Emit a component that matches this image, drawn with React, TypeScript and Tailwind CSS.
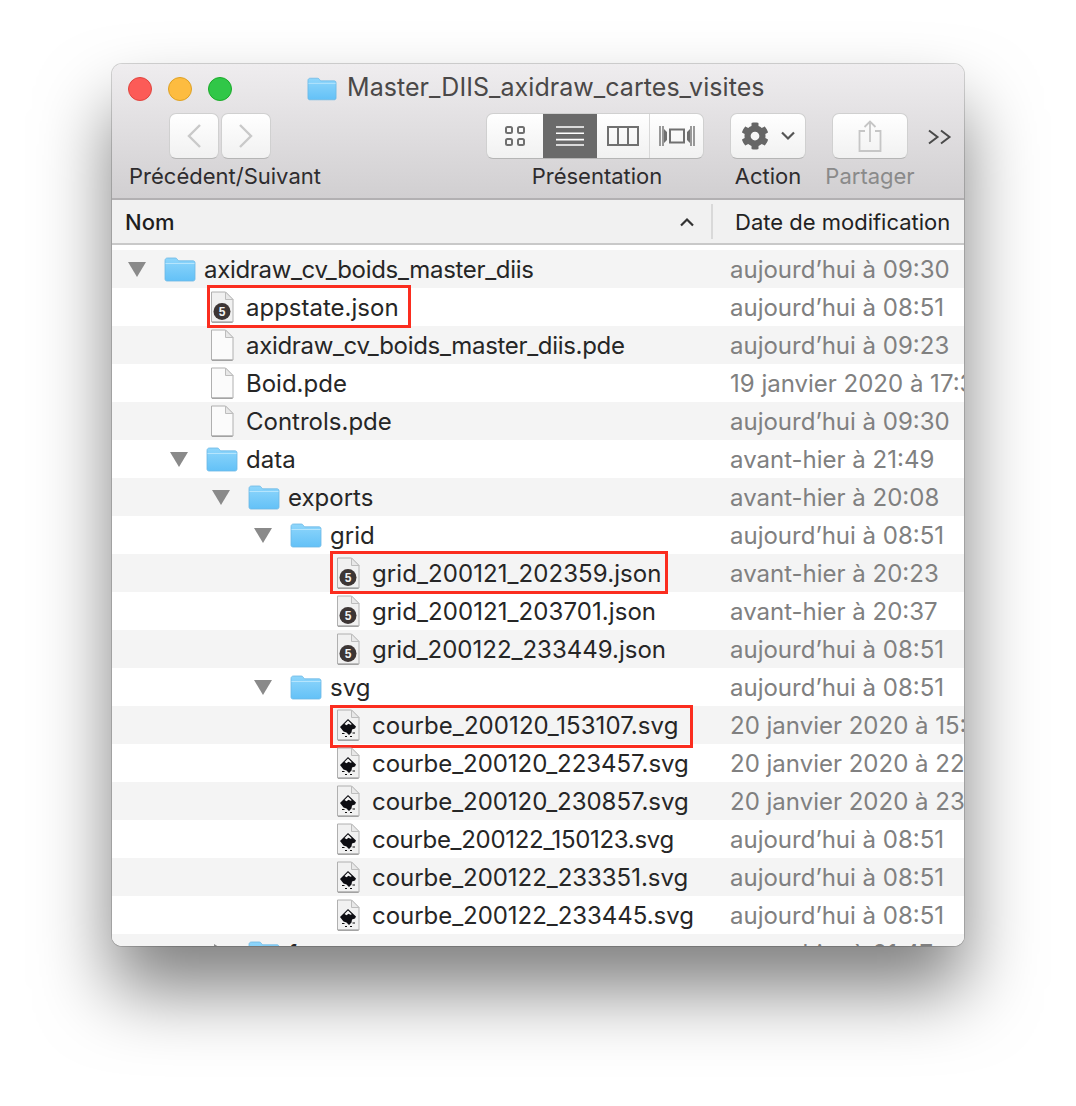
import type { ReactNode } from 'react'
import { FaCog } from 'react-icons/fa'

type Kind = 'folder' | 'blank' | 'json' | 'svg'

type Row = {
  name: string
  date: string
  depth: number
  kind: Kind
  closed?: boolean
  box?: string
  tracking: string
}

const rows: Row[] = [
  { name: 'axidraw_cv_boids_master_diis', date: 'aujourd’hui à 09:30', depth: 0, kind: 'folder', tracking: 'tracking-[-0.32px]' },
  { name: 'appstate.json', date: 'aujourd’hui à 08:51', depth: 1, kind: 'json', box: 'left-[95px] top-[-3px] w-[204px]', tracking: 'tracking-normal' },
  { name: 'axidraw_cv_boids_master_diis.pde', date: 'aujourd’hui à 09:23', depth: 1, kind: 'blank', tracking: 'tracking-[-0.32px]' },
  { name: 'Boid.pde', date: '19 janvier 2020 à 17:32', depth: 1, kind: 'blank', tracking: 'tracking-normal' },
  { name: 'Controls.pde', date: 'aujourd’hui à 09:30', depth: 1, kind: 'blank', tracking: 'tracking-normal' },
  { name: 'data', date: 'avant-hier à 21:49', depth: 1, kind: 'folder', tracking: 'tracking-normal' },
  { name: 'exports', date: 'avant-hier à 20:08', depth: 2, kind: 'folder', tracking: 'tracking-normal' },
  { name: 'grid', date: 'aujourd’hui à 08:51', depth: 3, kind: 'folder', tracking: 'tracking-normal' },
  { name: 'grid_200121_202359.json', date: 'avant-hier à 20:23', depth: 4, kind: 'json', box: 'left-[218px] top-[-3px] w-[338px]', tracking: 'tracking-[0.08px]' },
  { name: 'grid_200121_203701.json', date: 'avant-hier à 20:37', depth: 4, kind: 'json', tracking: 'tracking-[0.08px]' },
  { name: 'grid_200122_233449.json', date: 'aujourd’hui à 08:51', depth: 4, kind: 'json', tracking: 'tracking-normal' },
  { name: 'svg', date: 'aujourd’hui à 08:51', depth: 3, kind: 'folder', tracking: 'tracking-normal' },
  { name: 'courbe_200120_153107.svg', date: '20 janvier 2020 à 15:31', depth: 4, kind: 'svg', box: 'left-[218px] top-[-1px] w-[363px]', tracking: 'tracking-[0.08px]' },
  { name: 'courbe_200120_223457.svg', date: '20 janvier 2020 à 22:34', depth: 4, kind: 'svg', tracking: 'tracking-[-0.04px]' },
  { name: 'courbe_200120_230857.svg', date: '20 janvier 2020 à 23:08', depth: 4, kind: 'svg', tracking: 'tracking-[-0.04px]' },
  { name: 'courbe_200122_150123.svg', date: 'aujourd’hui à 08:51', depth: 4, kind: 'svg', tracking: 'tracking-[-0.3px]' },
  { name: 'courbe_200122_233351.svg', date: 'aujourd’hui à 08:51', depth: 4, kind: 'svg', tracking: 'tracking-[-0.04px]' },
  { name: 'courbe_200122_233445.svg', date: 'aujourd’hui à 08:51', depth: 4, kind: 'svg', tracking: 'tracking-[-0.04px]' },
  { name: 'fonts', date: 'avant-hier à 21:47', depth: 2, kind: 'folder', closed: true, tracking: 'tracking-normal' },
]

const indents = ['w-[16px]', 'w-[58px]', 'w-[100px]', 'w-[142px]', 'w-[184px]']

function FolderIcon({ small }: { small?: boolean }) {
  return (
    <svg width={small ? 30 : 32} height={small ? 24 : 25} viewBox="0 0 32 25" className="block">
      <defs>
        <linearGradient id="folderFill" x1="0" y1="0" x2="0" y2="1">
          <stop offset="0" stopColor="#8fd6fb" />
          <stop offset="1" stopColor="#63c1f7" />
        </linearGradient>
      </defs>
      <path
        d="M1 3.5C1 2 2 1 3.500 1h7.500c1.200 0 1.800 .5 2.500 1.500l1 1.300H29c1.200 0 2 .8 2 2V22c0 1.200-.8 2-2 2H3c-1.200 0-2-.8-2-2z"
        fill="url(#folderFill)"
        stroke="#6cb8e4"
        strokeWidth="0.8"
      />
      <path d="M1.500 6.500H30.500" stroke="#b5e5fd" strokeWidth="1" />
    </svg>
  )
}

function PageIcon({ kind }: { kind: Kind }) {
  return (
    <svg width="24" height="32" viewBox="0 0 24 32" className="block">
      <path d="M1.500 1H15.500L23 8.500V31H1.500z" fill={kind === 'blank' ? '#fbfbfb' : '#f1f1f1'} stroke="#b0b0b0" strokeWidth="1" />
      <path d="M15.500 1V8.500H23z" fill="#e8e8e8" stroke="#bdbdbd" strokeWidth="1" />
      <path d="M2 31.200H22.500" stroke="#8d8d8d" strokeWidth="1" />
      {kind === 'json' && (
        <>
          <circle cx="12" cy="20.500" r="8.500" fill="#3d3635" />
          <text x="12" y="24.800" textAnchor="middle" fontSize="12" fontWeight="700" fill="#f2f2f2" fontFamily="'Liberation Sans', sans-serif">
            5
          </text>
        </>
      )}
      {kind === 'svg' && (
        <>
          <path d="M12 10L20 17.500L19 19.500L16 20.500L15.500 23.500L13 26L10.500 23.500L7.500 22.500L4 18z" fill="#0d0d12" />
          <path d="M12 11.500L15.800 15.200L14.400 15.800L12.600 14.800L10.400 16.200L8.600 15z" fill="#f6f6f6" />
          <path d="M6 24.500H8.500M16.500 24H19M9 27.500H11M14 27.500H16" stroke="#111" strokeWidth="1.200" />
        </>
      )}
    </svg>
  )
}

function Triangle({ closed }: { closed?: boolean }) {
  return (
    <svg width="18" height="18" viewBox="0 0 18 18" className="block">
      {closed ? <path d="M2 0L17 9L2 18z" fill="#8a8a8a" /> : <path d="M0 2H18L9 17z" fill="#8a8a8a" />}
    </svg>
  )
}

function FileRow({ row, index }: { row: Row; index: number }) {
  const isFolder = row.kind === 'folder'
  return (
    <div className={`flex h-[38px] shrink-0 items-center ${index % 2 === 0 ? 'bg-[#f4f4f4]' : 'bg-white'}`}>
      <div className="relative flex h-full w-[618px] shrink-0 items-center">
        <div className={`shrink-0 ${indents[row.depth]}`} />
        {isFolder ? (
          <>
            <div className="w-[36px] shrink-0">
              <Triangle closed={row.closed} />
            </div>
            <div className="mr-[8px] w-[32px] shrink-0">
              <FolderIcon />
            </div>
          </>
        ) : (
          <div className="mr-[12px] ml-[40px] w-[24px] shrink-0">
            <PageIcon kind={row.kind} />
          </div>
        )}
        <span className={`whitespace-nowrap pt-[1px] text-[24px] leading-[38px] text-[#262626] ${row.tracking}`}>{row.name}</span>
        {row.box && <div className={`absolute h-[43px] border-[3px] border-[#fb2d1f] ${row.box}`} />}
      </div>
      <span className="whitespace-nowrap pt-[1px] text-[24px] leading-[38px] text-[#808080]">{row.date}</span>
    </div>
  )
}

function ToolButton({ className, children }: { className: string; children: ReactNode }) {
  return (
    <div
      className={`flex h-[46px] items-center justify-center rounded-[7px] border border-[#d0d0d0] border-b-[#b5b5b5] bg-gradient-to-b from-white to-[#f1f1f1] ${className}`}
    >
      {children}
    </div>
  )
}

function GridViewIcon() {
  return (
    <svg width="22" height="22" viewBox="0 0 22 22">
      <g fill="none" stroke="#707070" strokeWidth="2">
        <rect x="2" y="2" width="6" height="6" rx="1.500" />
        <rect x="14" y="2" width="6" height="6" rx="1.500" />
        <rect x="2" y="14" width="6" height="6" rx="1.500" />
        <rect x="14" y="14" width="6" height="6" rx="1.500" />
      </g>
    </svg>
  )
}

function ListViewIcon() {
  return (
    <svg width="28" height="20" viewBox="0 0 28 20">
      <path d="M0 1H28M0 7.300H28M0 13.600H28M0 19H28" stroke="#fff" strokeWidth="1.600" />
    </svg>
  )
}

function ColumnViewIcon() {
  return (
    <svg width="32" height="20" viewBox="0 0 32 20">
      <path d="M1 1H31V19H1zM11 1V19M21 1V19" fill="none" stroke="#707070" strokeWidth="2" />
    </svg>
  )
}

function GalleryViewIcon() {
  return (
    <svg width="36" height="22" viewBox="0 0 36 22">
      <g fill="none" stroke="#707070">
        <rect x="11" y="4.500" width="14" height="13" strokeWidth="2" />
        <path d="M1 1V21M4 1V21M32 1V21M35 1V21" strokeWidth="1.400" />
      </g>
      <path d="M5 4L8 7V15L5 18zM31 4L28 7V15L31 18z" fill="#707070" />
    </svg>
  )
}

function ShareIcon() {
  return (
    <svg width="24" height="32" viewBox="0 0 24 32">
      <path d="M7 11H1.500V31H22.500V11H17M12 22V2M6.500 7L12 1.500L17.500 7" fill="none" stroke="#c6c6c6" strokeWidth="1.800" />
    </svg>
  )
}

function Chevron({ dir, color }: { dir: 'left' | 'right'; color: string }) {
  return (
    <svg width="16" height="26" viewBox="0 0 16 26">
      <path d={dir === 'left' ? 'M14 2L3 13L14 24' : 'M2 2L13 13L2 24'} fill="none" stroke={color} strokeWidth="2.400" />
    </svg>
  )
}

export default function App() {
  return (
    <div className="h-[1106px] w-full overflow-hidden bg-white pt-[64px] pl-[112px] font-['Inter',sans-serif]">
      <div className="flex h-[882px] w-[852px] flex-col overflow-hidden rounded-[10px] bg-white shadow-[0_0_0_1px_rgba(0,0,0,0.16),0_44px_72px_rgba(0,0,0,0.5)]">
        <div className="flex h-[136px] shrink-0 flex-col border-b-2 border-[#b2b0b2] bg-gradient-to-b from-[#efedef] to-[#d1cfd1]">
          <div className="flex h-[49px] shrink-0 items-center pl-[16px]">
            <div className="flex gap-[16px]">
              <div className="h-[24px] w-[24px] rounded-full border border-[#e0443e] bg-[#fc5b57]" />
              <div className="h-[24px] w-[24px] rounded-full border border-[#dea123] bg-[#fdbc40]" />
              <div className="h-[24px] w-[24px] rounded-full border border-[#1aab29] bg-[#30c748]" />
            </div>
            <div className="ml-[75px] flex items-center">
              <FolderIcon small />
              <span className="mb-[2px] ml-[10px] whitespace-nowrap text-[25px] tracking-[0.05px] text-[#4a4848]">Master_DIIS_axidraw_cartes_visites</span>
            </div>
          </div>
          <div className="flex pl-[17px]">
            <div className="flex w-[192px] flex-col items-center">
              <div className="flex gap-[2px] pr-[10px]">
                <ToolButton className="w-[50px]">
                  <Chevron dir="left" color="#c9c9c9" />
                </ToolButton>
                <ToolButton className="w-[50px]">
                  <Chevron dir="right" color="#c9c9c9" />
                </ToolButton>
              </div>
              <span className="mt-[3px] whitespace-nowrap text-[22px] leading-[28px] text-[#2e2c2e]">Précédent/Suivant</span>
            </div>
            <div className="ml-[165px] flex w-[218px] flex-col items-center">
              <div className="flex h-[46px] w-full overflow-hidden rounded-[7px] border border-[#d0d0d0] border-b-[#b5b5b5] bg-gradient-to-b from-white to-[#f1f1f1]">
                <div className="flex w-[56px] items-center justify-center">
                  <GridViewIcon />
                </div>
                <div className="flex w-[54px] items-center justify-center bg-[#6a6a6a]">
                  <ListViewIcon />
                </div>
                <div className="flex w-[53px] items-center justify-center border-r border-[#d8d8d8]">
                  <ColumnViewIcon />
                </div>
                <div className="flex flex-1 items-center justify-center">
                  <GalleryViewIcon />
                </div>
              </div>
              <span className="mt-[3px] whitespace-nowrap pl-[4px] text-[22px] leading-[28px] text-[#2e2c2e]">Présentation</span>
            </div>
            <div className="ml-[26px] flex w-[76px] flex-col items-center">
              <ToolButton className="w-[76px] gap-[11px] pl-[1px]">
                <FaCog className="text-[#666] text-[28px]" />
                <svg width="16" height="10" viewBox="0 0 16 10">
                  <path d="M2 1.500L8 7.500L14 1.500" fill="none" stroke="#555" strokeWidth="2.200" />
                </svg>
              </ToolButton>
              <span className="mt-[3px] whitespace-nowrap text-[22px] leading-[28px] text-[#2e2c2e]">Action</span>
            </div>
            <div className="ml-[26px] flex w-[76px] flex-col items-center">
              <ToolButton className="w-[76px]">
                <ShareIcon />
              </ToolButton>
              <span className="mt-[3px] whitespace-nowrap text-[22px] leading-[28px] text-[#8a8a8a]">Partager</span>
            </div>
            <div className="ml-[20px] flex h-[46px] items-center pt-[2px]">
              <svg width="24" height="16" viewBox="0 0 24 16">
                <path d="M1 1.500L9.500 8L1 14.500M13 1.500L21.500 8L13 14.500" fill="none" stroke="#4a4a4a" strokeWidth="2" />
              </svg>
            </div>
          </div>
        </div>
        <div className="flex h-[45px] shrink-0 items-center border-b-2 border-[#c9c9c9] bg-[#f1f1f1]">
          <span className="ml-[13px] w-[556px] pt-[1px] text-[22px] font-medium text-[#1e1e1e]">Nom</span>
          <svg width="16" height="10" viewBox="0 0 16 10" className="ml-[-2px]">
            <path d="M2 8.500L8 2.500L14 8.500" fill="none" stroke="#333" strokeWidth="2.200" />
          </svg>
          <div className="mr-[22px] ml-[16px] h-[35px] w-[2px] bg-[#d9d9d9]" />
          <span className="whitespace-nowrap pt-[1px] text-[22px] text-[#222]">Date de modification</span>
        </div>
        <div className="flex flex-1 flex-col overflow-hidden bg-white pt-[5px]">
          {rows.map((row, index) => (
            <FileRow key={row.name} row={row} index={index} />
          ))}
        </div>
      </div>
    </div>
  )
}
